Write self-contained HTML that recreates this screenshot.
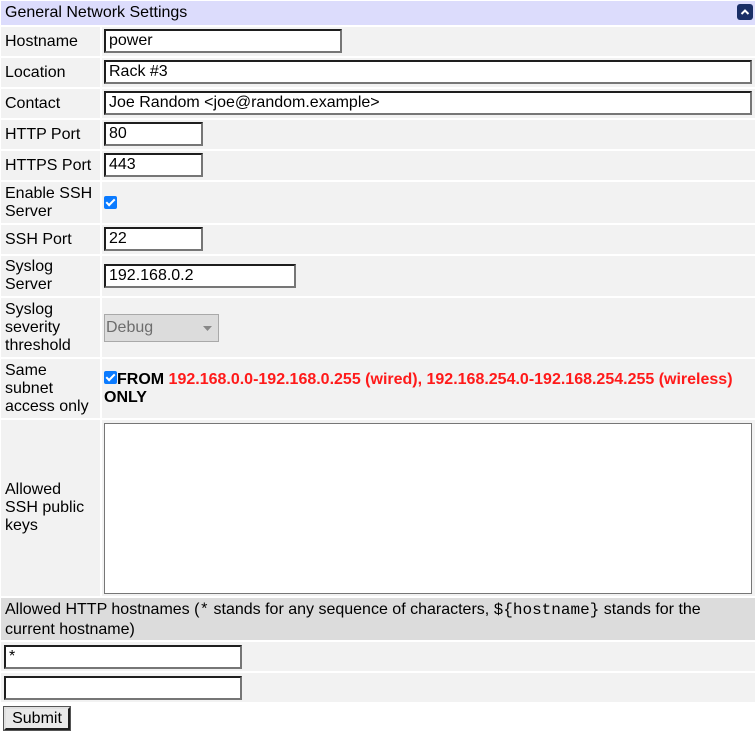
<!DOCTYPE html>
<html><head><meta charset="utf-8"><style>
*{box-sizing:border-box;margin:0;padding:0}
body{width:756px;height:735px;background:#fff;font-family:"Liberation Sans",sans-serif;font-size:16px;color:#000;position:relative;overflow:hidden}
.c{position:absolute;background:#f2f2f2;display:flex;align-items:center;line-height:18px}
.l{left:1px;width:99px;padding-left:4px}
.v{left:102px;width:653px;padding-left:2px}
.in{position:absolute;background:#fff;border:2px solid;border-color:#1e1e1e #767676 #767676 #1e1e1e;padding-left:3px;line-height:20px;font-size:16px}
.cb{display:inline-block;width:13px;height:13px;background:#0b7bff;border-radius:2px;position:relative;vertical-align:middle}
.cb:after{content:"";position:absolute;left:4px;top:1px;width:3px;height:7px;border:solid #fff;border-width:0 2px 2px 0;transform:rotate(45deg)}
.red{color:#ff1a1a}
.m{font-family:"Liberation Mono",monospace}
</style></head><body>
<div class="c" style="left:1px;top:1px;width:754px;height:24px;background:#dcdcfc;padding-left:4px">General Network Settings</div>
<div style="position:absolute;left:737px;top:4px;width:16px;height:16px;background:#1a2f66;border-radius:3px"><svg width="16" height="16"><path d="M4.5 10L8 6.5L11.5 10" stroke="#fff" stroke-width="2" fill="none"/></svg></div>

<div class="c l" style="top:27px;height:29px">Hostname</div><div class="c v" style="top:27px;height:29px"></div>
<div class="in" style="left:104px;top:29px;width:238px;height:24px">power</div>
<div class="c l" style="top:58px;height:29px">Location</div><div class="c v" style="top:58px;height:29px"></div>
<div class="in" style="left:104px;top:60px;width:648px;height:24px">Rack #3</div>
<div class="c l" style="top:89px;height:29px">Contact</div><div class="c v" style="top:89px;height:29px"></div>
<div class="in" style="left:104px;top:91px;width:648px;height:24px">Joe Random &lt;joe@random.example&gt;</div>
<div class="c l" style="top:120px;height:29px">HTTP Port</div><div class="c v" style="top:120px;height:29px"></div>
<div class="in" style="left:104px;top:122px;width:99px;height:24px">80</div>
<div class="c l" style="top:151px;height:29px">HTTPS Port</div><div class="c v" style="top:151px;height:29px"></div>
<div class="in" style="left:104px;top:153px;width:99px;height:24px">443</div>
<div class="c l" style="top:182px;height:41px">Enable SSH<br>Server</div><div class="c v" style="top:182px;height:41px"><span class="cb" style="margin-top:0px"></span></div>
<div class="c l" style="top:225px;height:29px">SSH Port</div><div class="c v" style="top:225px;height:29px"></div>
<div class="in" style="left:104px;top:227px;width:99px;height:24px">22</div>
<div class="c l" style="top:256px;height:40px">Syslog<br>Server</div><div class="c v" style="top:256px;height:40px"></div>
<div class="in" style="left:104px;top:264px;width:192px;height:24px">192.168.0.2</div>
<div class="c l" style="top:298px;height:59px">Syslog<br>severity<br>threshold</div><div class="c v" style="top:298px;height:59px"></div>
<div style="position:absolute;left:104px;top:314px;width:115px;height:28px;background:#dcdcdc;border:1px solid #a9a9a9;color:#6d6d6d;line-height:26px;padding-left:1px">Debug<svg style="position:absolute;left:98px;top:11px" width="10" height="6"><path d="M0 0H9L4.5 5Z" fill="#888"/></svg></div>
<div class="c l" style="top:359px;height:59px">Same<br>subnet<br>access only</div><div class="c v" style="top:359px;height:59px;font-weight:bold;display:block;padding-top:12px"><span class="cb" style="margin-top:-4px"></span>FROM <span class="red">192.168.0.0-192.168.0.255 (wired), 192.168.254.0-192.168.254.255 (wireless)</span><br>ONLY</div>
<div class="c l" style="top:420px;height:176px">Allowed<br>SSH public<br>keys</div><div class="c v" style="top:420px;height:176px"></div>
<div style="position:absolute;left:104px;top:423px;width:648px;height:171px;background:#fff;border:1px solid #767676"></div>
<div class="c" style="left:1px;top:598px;width:754px;height:42px;background:#dcdcdc;padding:2px 0 0 4px;display:block;line-height:20px">Allowed HTTP hostnames (<span class="m">*</span> stands for any sequence of characters, <span class="m">${hostname}</span> stands for the<br>current hostname)</div>
<div class="c" style="left:1px;top:642px;width:754px;height:29px"></div>
<div class="in" style="left:4px;top:645px;width:238px;height:24px">*</div>
<div class="c" style="left:1px;top:673px;width:754px;height:29px"></div>
<div class="in" style="left:4px;top:676px;width:238px;height:24px"></div>
<div style="position:absolute;left:4px;top:707px;width:66px;height:23px;background:#e9e9e9;border:2px solid;border-color:#e0e0e0 #1e1e1e #1e1e1e #e0e0e0;outline:1px solid #555;text-align:center;line-height:19px">Submit</div>
</body></html>
